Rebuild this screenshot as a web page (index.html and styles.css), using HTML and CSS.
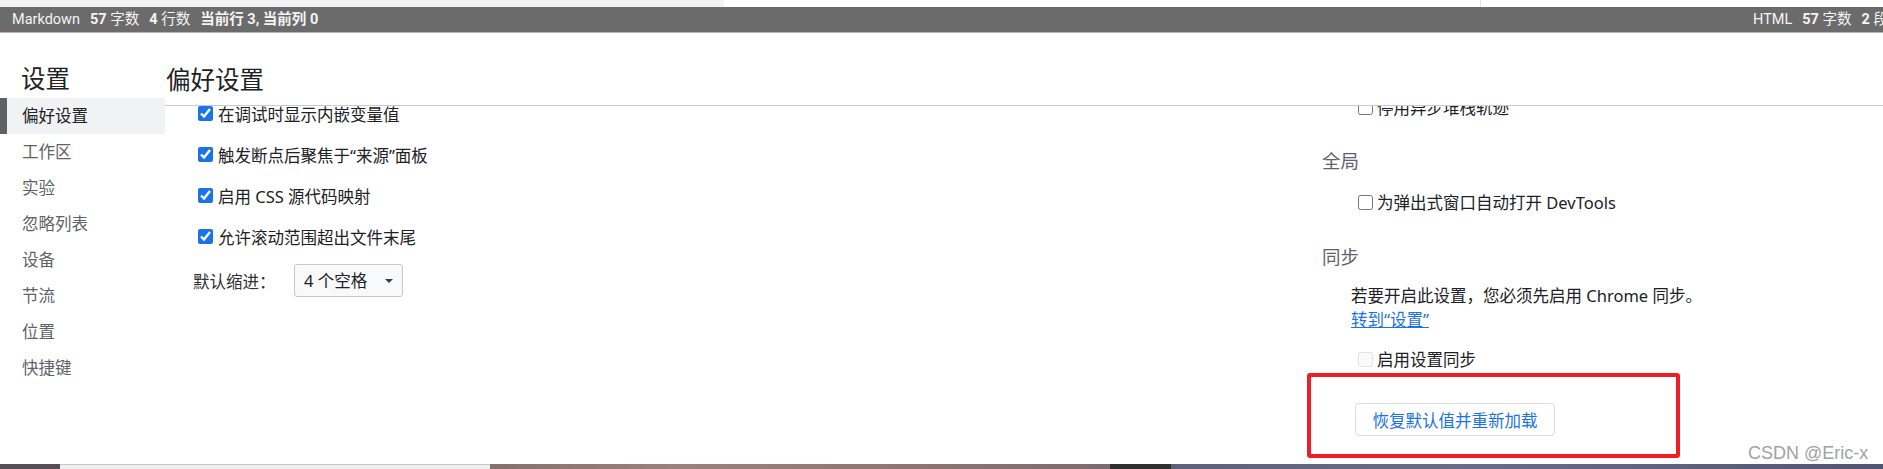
FILE: index.html
```html
<!DOCTYPE html>
<html lang="zh-CN">
<head>
  <meta charset="UTF-8">
  <title>设置 - 偏好设置</title>
  <link rel="stylesheet" href="styles.css">
</head>
<body>
  <div class="page">

    <!-- window strip above the status bar -->
    <div class="top-strip">
      <div class="top-tab"></div>
      <div class="top-divider"></div>
    </div>

    <!-- editor status bar -->
    <div class="status-bar">
      <div class="status-group">
        <span>Markdown</span>
        <span><b>57</b> 字数</span>
        <span><b>4</b> 行数</span>
        <span><b>当前行 3, 当前列 0</b></span>
      </div>
      <div class="status-group">
        <span>HTML</span>
        <span><b>57</b> 字数</span>
        <span><b>2</b> 段落</span>
      </div>
    </div>

    <div class="settings">
      <!-- Sidebar -->
      <div class="sidebar">
        <div class="sidebar-title">设置</div>
        <div class="nav-item active">偏好设置</div>
        <div class="nav-item">工作区</div>
        <div class="nav-item">实验</div>
        <div class="nav-item">忽略列表</div>
        <div class="nav-item">设备</div>
        <div class="nav-item">节流</div>
        <div class="nav-item">位置</div>
        <div class="nav-item">快捷键</div>
      </div>

      <!-- Main panel -->
      <div class="main">
        <div class="main-header">偏好设置</div>
        <div class="scroller">
          <div class="columns">

            <div class="col-left">
              <label class="check-row"><input type="checkbox" checked> 在调试时显示内嵌变量值</label>
              <label class="check-row"><input type="checkbox" checked> 触发断点后聚焦于“来源”面板</label>
              <label class="check-row"><input type="checkbox" checked> 启用 CSS 源代码映射</label>
              <label class="check-row"><input type="checkbox" checked> 允许滚动范围超出文件末尾</label>
              <div class="select-row">
                <span class="select-label">默认缩进：</span>
                <span class="select-wrap">
                  <select class="select">
                    <option>4 个空格</option>
                  </select>
                </span>
              </div>
            </div>

            <div class="col-right">
              <label class="check-row small"><input type="checkbox"> 停用异步堆栈轨迹</label>

              <h3 class="group-title">全局</h3>
              <label class="check-row small"><input type="checkbox"> 为弹出式窗口自动打开 DevTools</label>

              <h3 class="group-title">同步</h3>
              <p class="sync-note">
                若要开启此设置，您必须先启用 Chrome 同步。<br>
                <a href="#" class="link">转到“设置”</a>
              </p>
              <label class="check-row small disabled"><input type="checkbox" disabled> 启用设置同步</label>

              <button class="reset-button">恢复默认值并重新加载</button>
            </div>

          </div>
        </div>
      </div>
    </div>

    <!-- desktop / taskbar strip -->
    <div class="bottom-strip">
      <div class="seg seg-dark"></div>
      <div class="seg seg-light"></div>
      <div class="seg seg-brown"></div>
      <div class="seg seg-black"></div>
      <div class="seg seg-blue"></div>
    </div>

    <!-- annotation + watermark -->
    <div class="highlight-box"></div>
    <div class="watermark">CSDN @Eric-x</div>
  </div>
</body>
</html>
```

FILE: styles.css
```css
body {
  margin: 0;
  font-family: "Noto Sans", "Noto Sans CJK SC", sans-serif;
  color: #202124;
  background-color: #fff;
}

.page {
  position: relative;
  width: 1883px;
  height: 469px;
  display: flex;
  flex-direction: column;
  overflow: hidden;
}

/* top strip */
.top-strip {
  height: 7px;
  display: flex;
  flex-shrink: 0;
}

.top-tab {
  width: 724px;
  background-color: #f3f3f3;
}

.top-divider {
  margin-left: 756px;
  width: 1px;
  background-color: #e3e3e3;
}

/* status bar */
.status-bar {
  height: 25px;
  flex-shrink: 0;
  background-color: #6b6b6b;
  border-bottom: 1px solid #b4b6ba;
  color: #f4f4f4;
  font-family: Roboto, "Noto Sans CJK SC", sans-serif;
  font-size: 14.5px;
  line-height: 25px;
  display: grid;
  grid-template-columns: 1753px max-content;
  white-space: nowrap;
}

.status-group {
  display: flex;
  gap: 10px;
}

.status-group:first-child {
  padding-left: 12px;
}

.status-group b {
  font-weight: 700;
}

/* settings */
.settings {
  flex: 1;
  display: flex;
  min-height: 0;
}

.sidebar {
  width: 165px;
  flex-shrink: 0;
  padding-top: 30px;
}

.sidebar-title {
  font-size: 24.5px;
  line-height: 32px;
  padding-left: 21px;
  margin-bottom: 3px;
}

.nav-item {
  height: 36px;
  line-height: 36px;
  font-size: 16.5px;
  padding-left: 22px;
  color: #5f6368;
}

.nav-item.active {
  background-color: #f1f2f3;
  border-left: 7px solid #606060;
  padding-left: 15px;
  color: #202124;
}

.main {
  flex: 1;
  display: flex;
  flex-direction: column;
  min-width: 0;
}

.main-header {
  height: 73px;
  box-sizing: border-box;
  border-bottom: 1px solid #cbcbcb;
  padding-top: 31px;
  padding-left: 1px;
  font-size: 24.5px;
  line-height: 32px;
}

.scroller {
  flex: 1;
  overflow: hidden;
}

.columns {
  margin-top: -15px;
  padding-left: 28px;
  display: grid;
  grid-template-columns: 1129px 1fr;
}

.col-left {
  padding-top: 2px;
}

.check-row {
  display: flex;
  align-items: center;
  height: 41px;
  padding-left: 5px;
  font-size: 16.5px;
  gap: 5px;
}

.check-row input {
  width: 15px;
  height: 15px;
  margin: 0;
  accent-color: #1a73e8;
}

.check-row.small {
  height: 32px;
  padding-left: 36px;
  gap: 4px;
}

.check-row.disabled input {
  opacity: 0.6;
}

.select-row {
  margin-top: 7px;
  display: flex;
  align-items: center;
  height: 33px;
  font-size: 16.5px;
}

.select-label {
  width: 101px;
  color: #303134;
}

.select-wrap {
  position: relative;
  display: inline-block;
}

.select-wrap::after {
  content: "";
  position: absolute;
  right: 10px;
  top: 15px;
  border-left: 4px solid transparent;
  border-right: 4px solid transparent;
  border-top: 4px solid #3c3c3c;
  pointer-events: none;
}

.select {
  appearance: none;
  width: 109px;
  height: 33px;
  padding: 0 0 0 9px;
  border: 1px solid #c8c8c8;
  border-radius: 3px;
  background-color: #f8f9fa;
  font-family: "Noto Sans", "Noto Sans CJK SC", sans-serif;
  font-size: 16.5px;
  color: #202124;
}

.group-title {
  margin: 23px 0 0;
  height: 30px;
  line-height: 30px;
  font-size: 18.5px;
  font-weight: 400;
  color: #5f6368;
}

.group-title + .check-row {
  margin-top: 10px;
}

.col-right .group-title:nth-of-type(2) {
  margin-top: 24px;
}

.sync-note {
  margin: 12px 0 0;
  padding-left: 29px;
  font-size: 16.5px;
  line-height: 24px;
}

.link {
  color: #1a73e8;
  text-decoration: underline;
}

.sync-note + .check-row {
  margin-top: 11px;
}

.reset-button {
  display: block;
  margin: 28px 0 0 33px;
  width: 200px;
  height: 33px;
  background-color: #fff;
  border: 1px solid #dadce0;
  border-radius: 4px;
  color: #1a73e8;
  font-family: "Noto Sans", "Noto Sans CJK SC", sans-serif;
  font-size: 16.5px;
  padding: 0;
}

/* bottom strip */
.bottom-strip {
  height: 5px;
  flex-shrink: 0;
  display: flex;
}

.seg-dark {
  width: 60px;
  background-color: #574d57;
}

.seg-light {
  width: 430px;
  background-color: #efefef;
  border-top: 1px solid #c6c6c6;
}

.seg-brown {
  width: 620px;
  background: linear-gradient(90deg, #86706e, #9c807a 30%, #8d7472 70%, #7b6a70);
}

.seg-black {
  width: 61px;
  background-color: #2f2f2f;
}

.seg-blue {
  flex: 1;
  background: linear-gradient(90deg, #5d6079, #6a6c86 40%, #595e78 80%, #4f5570);
}

/* annotation */
.highlight-box {
  position: absolute;
  left: 1307px;
  top: 373px;
  width: 373px;
  height: 85px;
  box-sizing: border-box;
  border: 4px solid #ee1d26;
  border-radius: 3px;
}

.watermark {
  position: absolute;
  left: 1748px;
  top: 442px;
  font-family: "Liberation Sans", Arial, sans-serif;
  font-size: 18px;
  line-height: 22px;
  color: #a2a2a2;
}
```
